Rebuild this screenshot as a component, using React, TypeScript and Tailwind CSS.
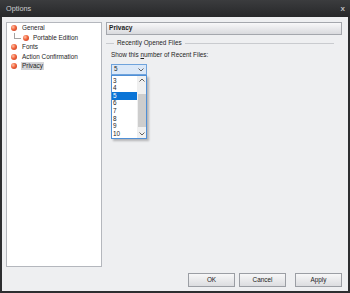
const font = { fontFamily: '"Liberation Sans", Arial, sans-serif' };

const Dot = () => (
  <span className="block w-[6px] h-[6px] rounded-full shrink-0 bg-[radial-gradient(circle_at_35%_35%,#ffc2a8_0%,#f0643c_45%,#b8321c_100%)]" />
);

const Chevron = ({ up }: { up?: boolean }) => (
  <svg width="6" height="4" viewBox="0 0 6 4" className="block">
    <path d={up ? "M0.5 3.5 L3 1 L5.5 3.5" : "M0.5 0.5 L3 3 L5.5 0.5"} fill="none" stroke="#606060" strokeWidth="1" />
  </svg>
);

const Button = ({ label, className }: { label: string; className?: string }) => (
  <button
    className={
      "w-[47px] h-[14px] border border-[#9b9ea4] bg-gradient-to-b from-[#f7f7f8] to-[#dcdde0] text-[6.4px] text-[#222] leading-none flex items-center justify-center " +
      (className ?? "")
    }
  >
    {label}
  </button>
);

export default function App() {
  const items = ["3", "4", "5", "6", "7", "8", "9", "10"];
  return (
    <div style={font} className="w-[350px] h-[293px] bg-[#2d2e30] flex flex-col overflow-hidden">
      <header className="h-[17px] shrink-0 flex items-center justify-between pl-[6px] pr-[5px] bg-gradient-to-b from-[#3b3c3e] to-[#27282a]">
        <span className="text-[7.3px] text-[#cfd0d2] leading-none">Options</span>
        <span className="text-[8px] text-[#b8b9bb] font-bold leading-none">x</span>
      </header>
      <div className="flex-1 mx-[2px] mb-[2px] bg-[#eeeff1] flex flex-col pt-[5px] pl-[4px] pr-[6px]">
        <div className="flex gap-[4px] h-[245px]">
          <div className="w-[96px] h-full bg-white border border-[#b4b7bd] pt-[0.5px] pl-[4px] text-[6.4px] text-[#1e1e1e]">
            <div className="h-[9.5px] flex items-center">
              <Dot />
              <span className="ml-[5px] leading-none">General</span>
            </div>
            <div className="h-[9.5px] flex items-center">
              <span className="self-start ml-[3px] w-[7px] h-[5.5px] border-l border-b border-[#a3a3a3]" />
              <span className="ml-[2px]"><Dot /></span>
              <span className="ml-[4px] leading-none">Portable Edition</span>
            </div>
            <div className="h-[9.5px] flex items-center">
              <Dot />
              <span className="ml-[5px] leading-none">Fonts</span>
            </div>
            <div className="h-[9.5px] flex items-center">
              <Dot />
              <span className="ml-[5px] leading-none">Action Confirmation</span>
            </div>
            <div className="h-[9.5px] flex items-center">
              <Dot />
              <span className="ml-[4px] px-[1px] h-[8px] flex items-center bg-[#d4d5d8] leading-none">Privacy</span>
            </div>
          </div>
          <div className="flex-1 flex flex-col text-[6.4px] text-[#1e1e1e]">
            <div className="h-[13px] border border-[#a4a7ad] bg-gradient-to-b from-[#f8f8f9] to-[#d9dade] flex items-center pl-[2px]">
              <span className="font-bold text-[6.6px] leading-none">Privacy</span>
            </div>
            <div className="h-[8px] mt-[4px] flex items-center pr-[8px]">
              <span className="w-[8px] h-px bg-[#c9cbcf]" />
              <span className="ml-[3px] mr-[3px] leading-none whitespace-nowrap">Recently Opened Files</span>
              <span className="flex-1 h-px bg-[#c9cbcf]" />
            </div>
            <div className="h-[8px] mt-[4px] pl-[5px] flex items-center">
              <span className="leading-none">
                Show this <span className="underline">n</span>umber of Recent Files:
              </span>
            </div>
            <div className="ml-[5px] mt-[5px] w-[36px]">
              <div className="h-[11px] border border-[#6fa3dc] bg-[#dbe8f8] flex items-center justify-between pl-[2px] pr-[2px]">
                <span className="leading-none">5</span>
                <Chevron />
              </div>
              <div className="h-[64px] border border-[#4f8fd6] bg-white flex shadow-[2px_2px_2px_rgba(0,0,0,0.25)]">
                <div className="flex-1 flex flex-col pt-[1px]">
                  {items.map((n) => (
                    <div
                      key={n}
                      className={
                        "h-[7.75px] flex items-center pl-[1px] leading-none " +
                        (n === "5" ? "bg-[#0a74d6] text-white" : "")
                      }
                    >
                      {n}
                    </div>
                  ))}
                </div>
                <div className="w-[9px] bg-[#f0f0f0] flex flex-col items-center">
                  <div className="h-[8px] flex items-center"><Chevron up /></div>
                  <div className="w-[8px] h-[33px] mt-[10px] bg-[#cdcdcd]" />
                  <div className="flex-1" />
                  <div className="h-[8px] flex items-center"><Chevron /></div>
                </div>
              </div>
            </div>
          </div>
        </div>
        <div className="flex justify-end mt-[6px]">
          <Button label="OK" />
          <Button label="Cancel" className="ml-[4px]" />
          <Button label="Apply" className="ml-[9px]" />
        </div>
      </div>
    </div>
  );
}
